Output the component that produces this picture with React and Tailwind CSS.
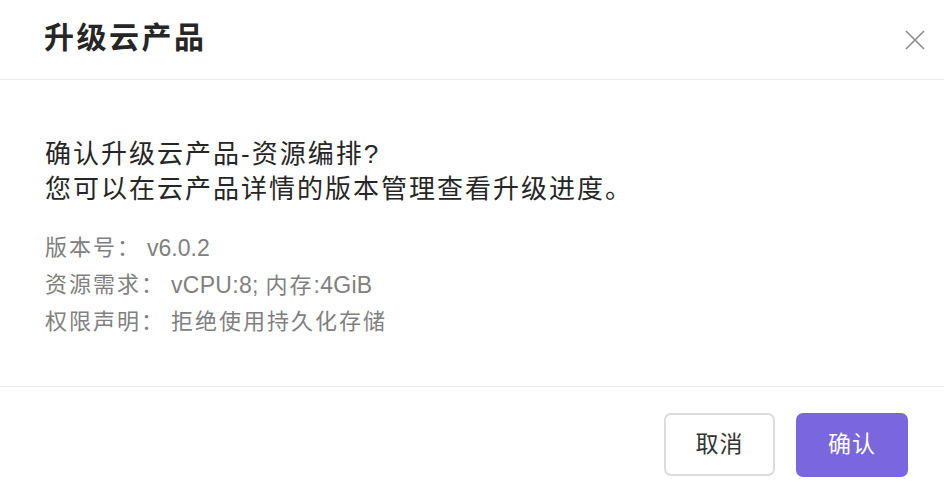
import React from "react";

const font = { fontFamily: '"Liberation Sans", "Noto Sans CJK SC", sans-serif' };

function Row({ label, children }) {
  return (
    <div className="flex">
      <span className="tracking-[2px]">{label}</span>
      <span className="ml-[6px]">{children}</span>
    </div>
  );
}

export default function App() {
  return (
    <div className="w-[944px] h-[496px] bg-white flex flex-col overflow-hidden" style={font}>
      <div className="h-[80px] shrink-0 flex items-center justify-between pl-[44px] pr-[17px] pb-[3px] border-b border-[#ededed]">
        <div className="text-[30px] font-bold text-[#262626] leading-none tracking-[2.5px]">升级云产品</div>
        <svg width="24" height="24" viewBox="0 0 24 24" className="text-[#8c8c8c] mt-[3px]">
          <path d="M3 3L21 21M21 3L3 21" stroke="currentColor" strokeWidth="1.6" fill="none" />
        </svg>
      </div>
      <div className="flex-1 flex flex-col pl-[45px] pt-[57px]">
        <div className="text-[26px] leading-[35px] text-[#262626] tracking-[2px]">
          <div>确认升级云产品-资源编排?</div>
          <div>您可以在云产品详情的版本管理查看升级进度。</div>
        </div>
        <div className="mt-[23px] text-[22px] leading-[36px] text-[#808080]">
          <Row label="版本号：">
            <span className="text-[23px]">v6.0.2</span>
          </Row>
          <Row label="资源需求：">
            <span className="text-[23px] tracking-[0.3px]">vCPU:8; </span>
            <span className="tracking-[2px]">内存</span>
            <span className="text-[23px] tracking-[0.3px]">:4GiB</span>
          </Row>
          <Row label="权限声明：">
            <span className="tracking-[2px]">拒绝使用持久化存储</span>
          </Row>
        </div>
      </div>
      <div className="h-[110px] shrink-0 border-t border-[#e8ecf1] flex items-center justify-end pr-[36px] pt-[6px] gap-[21px]">
        <button className="w-[111px] h-[63px] rounded-[7px] border-2 border-[#dcdcdc] bg-white text-[23px] text-[#333] tracking-[1px]">取消</button>
        <button className="w-[112px] h-[64px] rounded-[7px] bg-[#7a66df] text-[23px] text-white tracking-[1px]">确认</button>
      </div>
    </div>
  );
}
